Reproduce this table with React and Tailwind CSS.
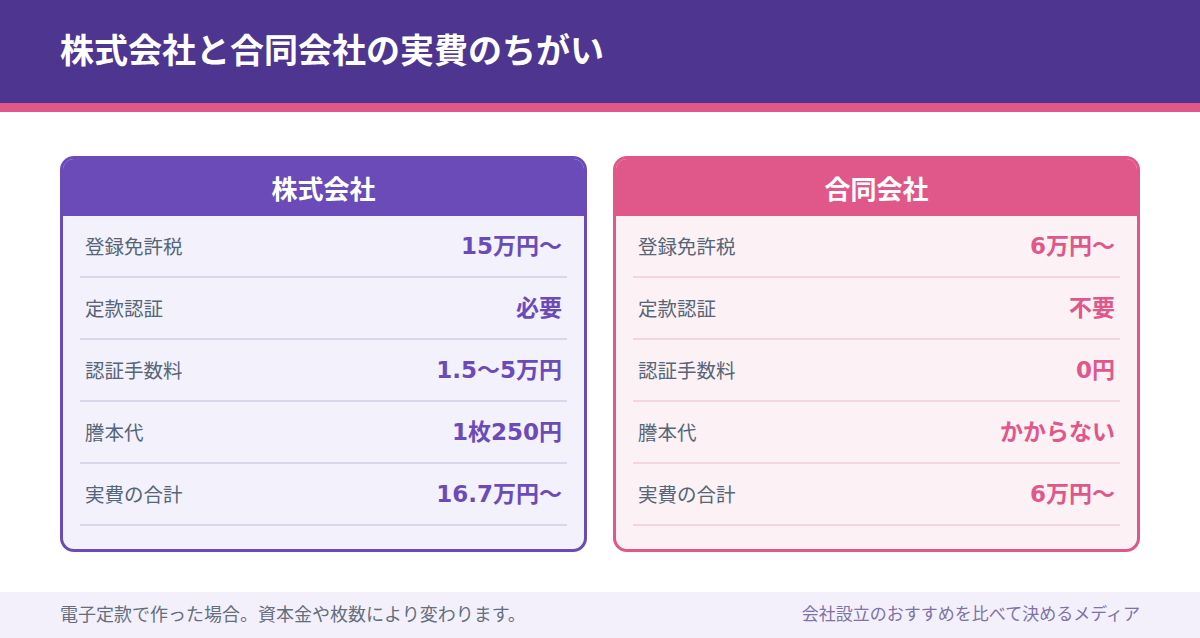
import React from "react";

const jp = { fontFamily: '"Noto Sans CJK JP", "Noto Sans", sans-serif' };
const num = { fontFamily: '"DejaVu Sans", "Noto Sans CJK JP", sans-serif' };

const cards = [
  {
    title: "株式会社",
    border: "border-[#6a4bb8]",
    head: "bg-[#6a4bb8]",
    body: "bg-[#f3f1fb]",
    line: "border-[#dcd5ec]",
    value: "text-[#6a4bb8]",
    rows: [
      ["登録免許税", "15万円〜"],
      ["定款認証", "必要"],
      ["認証手数料", "1.5〜5万円"],
      ["謄本代", "1枚250円"],
      ["実費の合計", "16.7万円〜"],
    ],
  },
  {
    title: "合同会社",
    border: "border-[#e0578a]",
    head: "bg-[#e0578a]",
    body: "bg-[#fcf1f5]",
    line: "border-[#f5d5e1]",
    value: "text-[#e0578a]",
    rows: [
      ["登録免許税", "6万円〜"],
      ["定款認証", "不要"],
      ["認証手数料", "0円"],
      ["謄本代", "かからない"],
      ["実費の合計", "6万円〜"],
    ],
  },
];

const Card = ({ c }) => (
  <div className={`flex-1 rounded-[14px] border-[3px] ${c.border} ${c.body} overflow-hidden h-[396px] flex flex-col`}>
    <div className={`${c.head} h-[57px] flex items-center justify-center text-white text-[26px] font-bold`}>
      {c.title}
    </div>
    <div className="px-[17px]">
      {c.rows.map(([label, val]) => (
        <div key={label} className={`h-[62px] border-b-2 ${c.line} flex items-center justify-between px-[5px]`}>
          <span className="text-[19.5px] text-[#566577]">{label}</span>
          <span className={`text-[23px] font-bold ${c.value}`} style={num}>{val}</span>
        </div>
      ))}
    </div>
  </div>
);

export default function App() {
  return (
    <div className="w-[1200px] h-[638px] bg-white flex flex-col" style={jp}>
      {/* Header */}
      <header className="h-[112px] bg-[#4d3590] border-b-[9px] border-[#e0578a] flex items-center px-[60px] pb-[6px]">
        <h1 className="text-white text-[34px] font-bold">株式会社と合同会社の実費のちがい</h1>
      </header>

      {/* Cards */}
      <div className="flex gap-[26px] px-[60px] mt-[44px]">
        {cards.map((c) => (
          <Card key={c.title} c={c} />
        ))}
      </div>

      {/* Footer */}
      <footer className="mt-auto h-[46px] bg-[#f3f0fb] flex items-center justify-between px-[60px] pb-[4px]">
        <span className="text-[18px] text-[#646e7c]">電子定款で作った場合。資本金や枚数により変わります。</span>
        <span className="text-[17px] text-[#7e72a6]">会社設立のおすすめを比べて決めるメディア</span>
      </footer>
    </div>
  );
}
